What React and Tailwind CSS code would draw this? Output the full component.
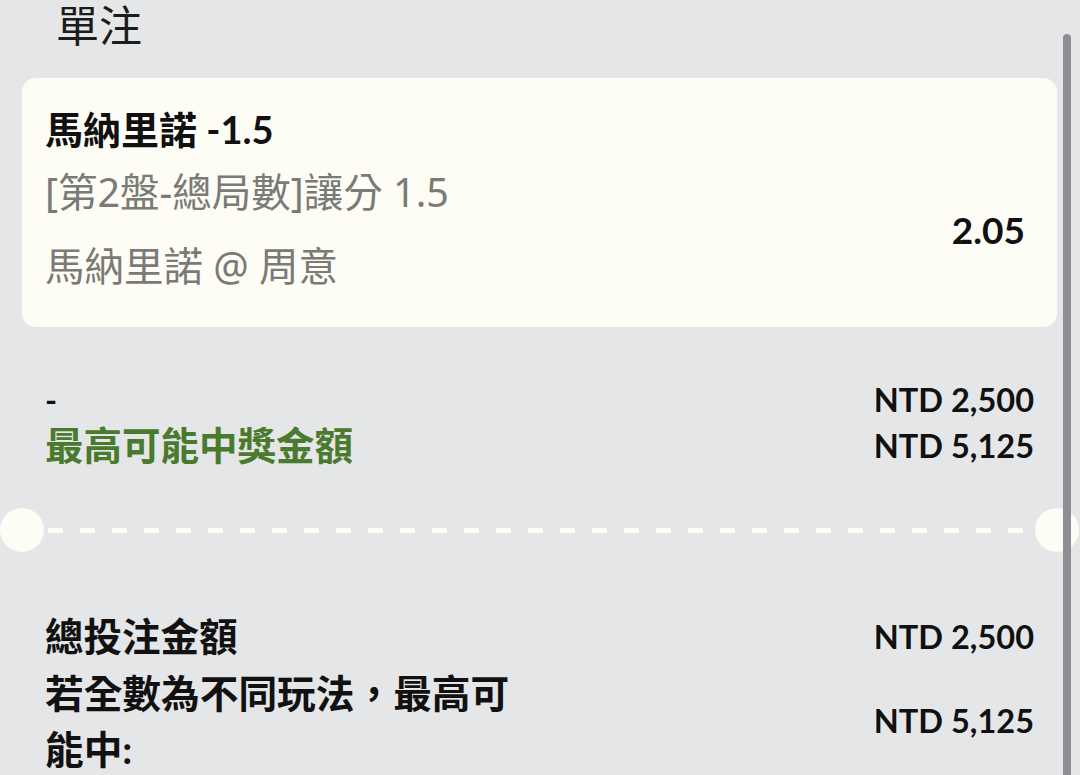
export default function App() {
  const font = "font-['Lato','Noto_Sans_CJK_TC',sans-serif]";
  return (
    <div className={`relative w-[1080px] h-[775px] overflow-hidden bg-[#e5e6e8] text-[#111] ${font}`}>
      {/* title */}
      <div className="pl-[56px] h-[52px] leading-[52px] text-[43px] text-[#1c1c1c]">單注</div>

      {/* card */}
      <div className="mt-[26px] ml-[22px] mr-[23px] rounded-[14px] bg-[#fdfdf5] pl-[23px] pr-[32px] pt-[24px] pb-[23px]">
        <div className="h-[54px] leading-[54px] text-[38px] font-bold">馬納里諾 -1.5</div>
        <div className="flex items-center justify-between">
          <div className="text-[39.5px] text-[#7a7a76] font-['Noto_Sans','Noto_Sans_CJK_TC',sans-serif]">
            <div className="h-[72px] leading-[72px]">[第2盤-總局數]讓分 1.5</div>
            <div className="h-[76px] leading-[76px]">馬納里諾 @ 周意</div>
          </div>
          <div className="text-[37px] font-bold">2.05</div>
        </div>
      </div>

      {/* section 2 */}
      <div className="mt-[50px] pl-[45px] pr-[46px] text-[32.5px] font-bold">
        <div className="flex h-[46px] items-center justify-between">
          <span>-</span>
          <span>NTD 2,500</span>
        </div>
        <div className="flex h-[46px] items-center justify-between">
          <span className="text-[38.5px] text-[#4a7a2d]">最高可能中獎金額</span>
          <span>NTD 5,125</span>
        </div>
      </div>

      {/* divider */}
      <div className="mt-[39px] flex h-[44px] items-center">
        <div className="h-[44px] w-[44px] shrink-0 rounded-full bg-[#fdfdf5]" />
        <div className="mx-[4px] h-[5px] flex-1 bg-[repeating-linear-gradient(to_right,#fdfdf5_0_15px,transparent_15px_32px)]" />
        <div className="mr-[1px] h-[44px] w-[44px] shrink-0 rounded-full bg-[#fdfdf5]" />
      </div>

      {/* section 3 */}
      <div className="mt-[57px] pl-[45px] pr-[46px] font-bold">
        <div className="flex h-[56px] items-center justify-between">
          <span className="text-[38.5px]">總投注金額</span>
          <span className="text-[32.5px]">NTD 2,500</span>
        </div>
        <div className="flex items-center justify-between">
          <div className="w-[490px] text-[38.7px] leading-[56px]">若全數為不同玩法，最高可能中:</div>
          <span className="text-[32.5px]">NTD 5,125</span>
        </div>
      </div>

      {/* scrollbar */}
      <div className="absolute left-[1063px] top-[34px] h-[760px] w-[8px] rounded-full bg-[#8e8e92]" />
    </div>
  );
}
